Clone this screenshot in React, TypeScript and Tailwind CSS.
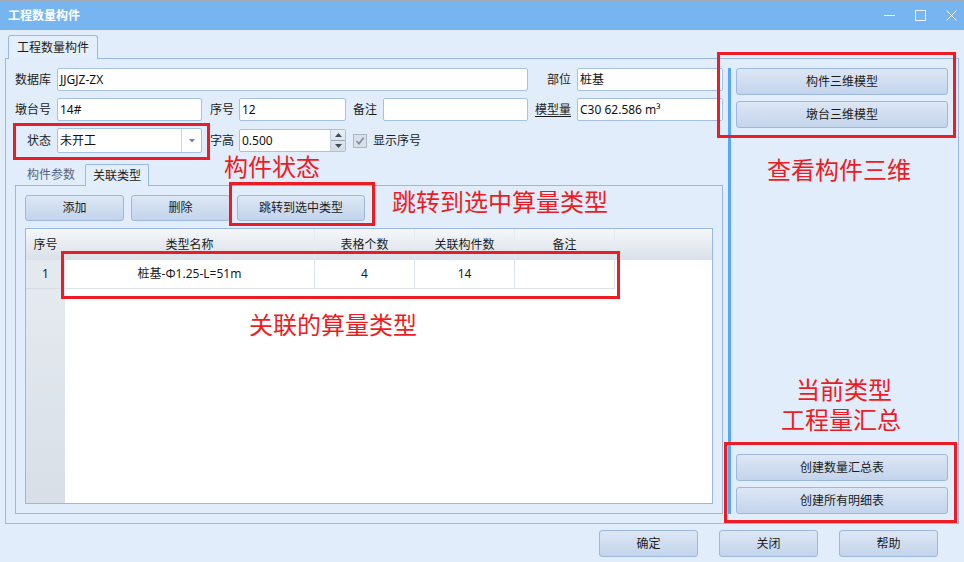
import React from 'react'

const font = "font-['Noto_Sans','Noto_Sans_CJK_SC',sans-serif]"
const redBox = 'absolute border-[3px] border-[#ec1c24] pointer-events-none'
const redText = "absolute text-[24px] leading-[24px] text-[#ec1c24] whitespace-nowrap font-['Noto_Sans_CJK_SC',sans-serif]"

function Btn({ children, className = '' }: { children: React.ReactNode; className?: string }) {
  return (
    <div
      className={
        'flex items-center justify-center border border-[#9db8dd] rounded-[3px] bg-linear-to-b from-[#dde7f5] to-[#c3d4eb] text-[12px] text-[#1b1b1b] ' +
        className
      }
    >
      {children}
    </div>
  )
}

function Field({ w, value = '' }: { w: string; value?: string }) {
  return (
    <div
      className={
        'h-[23px] flex items-center border border-[#a6c1e6] rounded-[2px] bg-white px-[2px] text-[12px] text-[#111] whitespace-nowrap overflow-hidden ' +
        w
      }
    >
      {value}
    </div>
  )
}

function Label({ w, pr = 'pr-[6px]', children }: { w: string; pr?: string; children: React.ReactNode }) {
  return <div className={'text-right text-[12px] text-[#1b1b1b] shrink-0 ' + w + ' ' + pr}>{children}</div>
}

export default function App() {
  return (
    <div className={'relative w-[964px] h-[562px] overflow-hidden bg-[#e1edfb] flex flex-col ' + font}>
      {/* title bar */}
      <div className="h-[30px] shrink-0 bg-[#77b5f1] border-t border-[#a3acb6] flex items-center pl-[8px] pr-[7px]">
        <span className="text-[12px] font-bold text-white">工程数量构件</span>
        <div className="ml-auto flex items-center gap-[20px]">
          <svg width="11" height="11" viewBox="0 0 11 11">
            <path d="M0 5.5H11" stroke="#eef4fb" strokeWidth="1" />
          </svg>
          <svg width="11" height="11" viewBox="0 0 11 11">
            <rect x="0.5" y="0.5" width="10" height="10" fill="none" stroke="#eef4fb" strokeWidth="1" />
          </svg>
          <svg width="11" height="11" viewBox="0 0 11 11">
            <path d="M0.5 0.5L10.5 10.5M10.5 0.5L0.5 10.5" stroke="#eef4fb" strokeWidth="1" />
          </svg>
        </div>
      </div>

      {/* outer tab strip */}
      <div className="h-[28px] shrink-0 flex items-end pl-[8px]">
        <div className="relative z-10 -mb-px h-[24px] px-[8px] flex items-center border border-b-0 border-[#99b8e3] rounded-t-[3px] bg-[#e4effc] text-[12px] text-[#1b1b1b]">
          工程数量构件
        </div>
      </div>

      {/* main panel */}
      <div className="h-[466px] shrink-0 ml-[5px] mr-[5px] border border-[#99b8e3] flex">
        {/* left column */}
        <div className="w-[722px] flex flex-col pt-[9px] pl-[8px]">
          <div className="flex flex-col gap-[7px]">
            <div className="flex items-center">
              <Label w="w-[43px]">数据库</Label>
              <Field w="w-[471px]" value="JJGJZ-ZX" />
              <Label w="w-[49px]">部位</Label>
              <Field w="w-[146px]" value="桩基" />
            </div>
            <div className="flex items-center">
              <Label w="w-[43px]">墩台号</Label>
              <Field w="w-[145px]" value="14#" />
              <Label w="w-[37px]" pr="pr-[5px]">序号</Label>
              <Field w="w-[107px]" value="12" />
              <Label w="w-[37px]">备注</Label>
              <Field w="w-[145px]" />
              <Label w="w-[49px]">
                <span className="underline underline-offset-2">模型量</span>
              </Label>
              <Field w="w-[146px]" value="C30 62.586 m³" />
            </div>
            <div className="flex items-center">
              <Label w="w-[43px]">状态</Label>
              <div className="w-[145px] h-[25px] flex border border-[#a6c1e6] rounded-[2px] bg-white text-[12px] text-[#111]">
                <div className="flex-1 flex items-center px-[2px]">未开工</div>
                <div className="w-[20px] border-l border-[#c5d5ea] flex items-center justify-center">
                  <svg width="6" height="4" viewBox="0 0 6 4">
                    <path d="M0 0H6L3 3.5Z" fill="#6584ad" />
                  </svg>
                </div>
              </div>
              <Label w="w-[37px]" pr="pr-[5px]">字高</Label>
              <div className="w-[107px] h-[23px] flex border border-[#a6c1e6] rounded-[2px] bg-white text-[12px] text-[#111]">
                <div className="flex-1 flex items-center px-[2px]">0.500</div>
                <div className="w-[15px] flex flex-col bg-linear-to-b from-[#e8edf3] to-[#d3dbe5] border-l border-[#c2cfdf]">
                  <div className="flex-1 flex items-center justify-center border-b border-[#9aa7b8]">
                    <svg width="7" height="4" viewBox="0 0 7 4">
                      <path d="M0 4H7L3.5 0Z" fill="#3f4a58" />
                    </svg>
                  </div>
                  <div className="flex-1 flex items-center justify-center">
                    <svg width="7" height="4" viewBox="0 0 7 4">
                      <path d="M0 0H7L3.5 4Z" fill="#3f4a58" />
                    </svg>
                  </div>
                </div>
              </div>
              <div className="ml-[7px] w-[14px] h-[14px] border border-[#a9b6c6] bg-[#d9e0e8] flex items-center justify-center">
                <svg width="10" height="10" viewBox="0 0 10 10">
                  <path d="M1.5 5L4 7.8L8.6 1.8" fill="none" stroke="#7f8b9b" strokeWidth="1.6" />
                </svg>
              </div>
              <span className="ml-[6px] text-[12px] text-[#1b1b1b]">显示序号</span>
            </div>
          </div>

          {/* inner tab control */}
          <div className="mt-[11px] mb-[9px] ml-[1px] mr-[5px] flex-1 flex flex-col">
            <div className="h-[21px] flex items-end text-[12px]">
              <div className="ml-[2px] h-[20px] px-[10px] flex items-center text-[#56657b]">构件参数</div>
              <div className="relative z-10 -mb-px h-[22px] px-[7px] flex items-center border border-b-0 border-[#99b8e3] rounded-t-[2px] bg-[#e3eefb] text-[#1b1b1b]">
                关联类型
              </div>
            </div>
            <div className="flex-1 border border-[#99b8e3] flex flex-col pt-[9px] px-[9px] pb-[9px]">
              <div className="flex gap-[7px]">
                <Btn className="w-[99px] h-[26px]">添加</Btn>
                <Btn className="w-[99px] h-[26px]">删除</Btn>
                <Btn className="w-[128px] h-[26px]">跳转到选中类型</Btn>
              </div>
              <div className="mt-[7px] flex-1 border border-[#99b8e3] flex flex-col text-[12px] text-[#1b1b1b]">
                <div className="h-[31px] flex bg-linear-to-b from-[#f5f7fa] to-[#d9e0e8]">
                  <div className="w-[39px] flex items-center justify-center">序号</div>
                  <div className="w-[250px] flex items-center justify-center border-r border-[#e6ebf1]">类型名称</div>
                  <div className="w-[100px] flex items-center justify-center border-r border-[#e6ebf1]">表格个数</div>
                  <div className="w-[100px] flex items-center justify-center border-r border-[#e6ebf1]">关联构件数</div>
                  <div className="w-[100px] flex items-center justify-center border-r border-[#e6ebf1]">备注</div>
                  <div className="flex-1" />
                </div>
                <div className="flex-1 flex">
                  <div className="w-[39px] flex flex-col bg-linear-to-b from-[#e7ebf1] to-[#d8dfe7]">
                    <div className="h-[29px] flex items-center justify-center border-b border-[#d3dbe5] bg-[#e4e9f0]">1</div>
                  </div>
                  <div className="flex-1 bg-white">
                    <div className="h-[29px] flex">
                      <div className="w-[250px] flex items-center justify-center border-r border-b border-[#dbe4ee]">桩基-Φ1.25-L=51m</div>
                      <div className="w-[100px] flex items-center justify-center border-r border-b border-[#dbe4ee]">4</div>
                      <div className="w-[100px] flex items-center justify-center border-r border-b border-[#dbe4ee]">14</div>
                      <div className="w-[100px] flex items-center justify-center border-r border-b border-[#dbe4ee]"></div>
                    </div>
                  </div>
                </div>
              </div>
            </div>
          </div>
        </div>

        {/* right column */}
        <div className="w-[230px] flex pt-[9px] pb-[9px]">
          <div className="w-[3px] bg-[#58a7f6]" />
          <div className="w-[212px] ml-[5px] flex flex-col justify-between">
            <div className="flex flex-col gap-[6px]">
              <Btn className="h-[27px]">构件三维模型</Btn>
              <Btn className="h-[27px]">墩台三维模型</Btn>
            </div>
            <div className="flex flex-col gap-[6px]">
              <Btn className="h-[27px]">创建数量汇总表</Btn>
              <Btn className="h-[27px]">创建所有明细表</Btn>
            </div>
          </div>
        </div>
      </div>

      {/* footer */}
      <div className="flex-1 flex justify-end items-start pt-[6px] pr-[26px] gap-[21px]">
        <Btn className="w-[99px] h-[27px]">确定</Btn>
        <Btn className="w-[99px] h-[27px]">关闭</Btn>
        <Btn className="w-[99px] h-[27px]">帮助</Btn>
      </div>

      {/* annotations */}
      <div className={redBox + ' left-[13px] top-[123px] w-[197px] h-[37px]'} />
      <div className={redText + ' left-[224px] top-[154px]'}>构件状态</div>
      <div className={redBox + ' left-[229px] top-[182px] w-[146px] h-[44px]'} />
      <div className={redText + ' left-[392px] top-[189px]'}>跳转到选中算量类型</div>
      <div className={redBox + ' left-[61px] top-[251px] w-[559px] h-[48px]'} />
      <div className={redText + ' left-[249px] top-[312px]'}>关联的算量类型</div>
      <div className={redBox + ' left-[717px] top-[52px] w-[239px] h-[86px]'} />
      <div className={redText + ' left-[767px] top-[157px]'}>查看构件三维</div>
      <div className={redText + ' left-[796px] top-[377px]'}>当前类型</div>
      <div className={redText + ' left-[781px] top-[407px]'}>工程量汇总</div>
      <div className={redBox + ' left-[724px] top-[442px] w-[233px] h-[81px]'} />
    </div>
  )
}
